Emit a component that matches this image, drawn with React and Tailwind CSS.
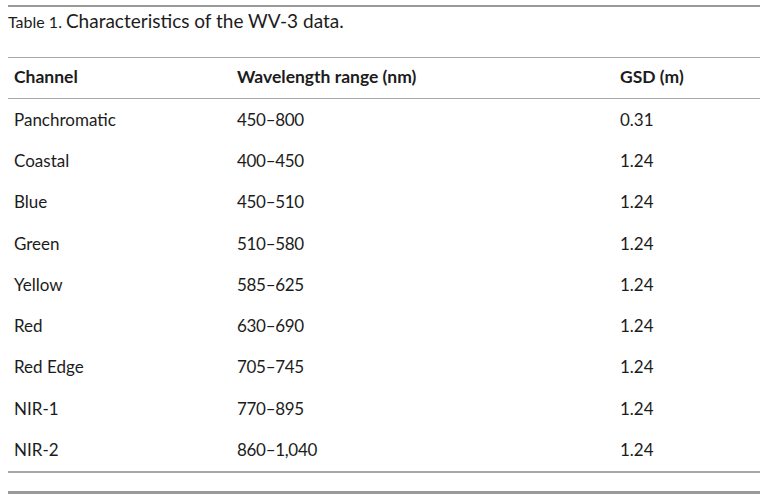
const rows = [
  ['Panchromatic', '450–800', '0.31'],
  ['Coastal', '400–450', '1.24'],
  ['Blue', '450–510', '1.24'],
  ['Green', '510–580', '1.24'],
  ['Yellow', '585–625', '1.24'],
  ['Red', '630–690', '1.24'],
  ['Red Edge', '705–745', '1.24'],
  ['NIR-1', '770–895', '1.24'],
  ['NIR-2', '860–1,040', '1.24'],
];

export default function App() {
  return (
    <div className="w-[768px] h-[500px] bg-white px-[8px] pt-[5px] text-[#1c1c1c] font-['Lato',sans-serif]">
      <div className="border-t-2 border-[#9a9a9a]" />
      <div className="flex items-baseline h-[35px]">
        <span className="text-[16px]">Table 1.</span>
        <span className="text-[19px] ml-[4px]">Characteristics of the WV-3 data.</span>
      </div>
      <div className="mt-[15px] border-t border-[#a8a8a8]" />
      <div className="grid grid-cols-[223px_383px_1fr] h-[41px] items-center border-b border-[#a8a8a8] px-[6px] pb-[1px] text-[17.5px] font-bold">
        <div>Channel</div>
        <div>Wavelength range (nm)</div>
        <div>GSD (m)</div>
      </div>
      {rows.map(([ch, wl, gsd], i) => (
        <div
          key={i}
          className="grid grid-cols-[223px_383px_1fr] h-[41.25px] items-center px-[6px] text-[17px]"
        >
          <div>{ch}</div>
          <div className="tracking-[-0.3px]">{wl}</div>
          <div>{gsd}</div>
        </div>
      ))}
      <div className="mt-[1px] border-t-2 border-[#a8a8a8]" />
      <div className="mt-[18px] border-t-[3px] border-[#9a9a9a]" />
    </div>
  );
}
